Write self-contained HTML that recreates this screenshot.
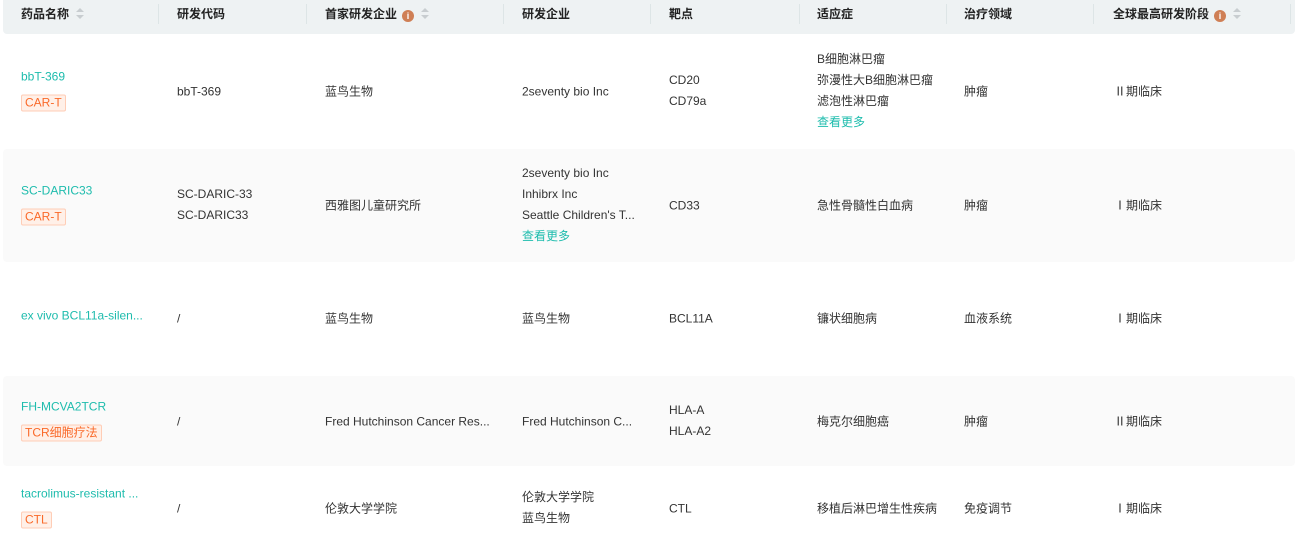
<!DOCTYPE html><html><head><meta charset="utf-8"><style>
*{margin:0;padding:0;box-sizing:border-box}
body{width:1295px;height:540px;background:#fff;font-family:"Liberation Sans","Noto Sans CJK SC",sans-serif;font-size:12px;color:#333;position:relative;overflow:hidden}
.hd{position:absolute;left:3px;top:0;width:1292px;height:34px;background:#eef2f3;border-radius:0 0 4px 4px}
.sep{position:absolute;top:4px;width:1px;height:20px;background:#dde5e6}
.h{position:absolute;top:6px;font-weight:bold;color:#222;font-size:12px;line-height:16px;white-space:nowrap}
.bg{position:absolute;left:3px;width:1292px;background:#fafafa;border-radius:4px}
.c{position:absolute;line-height:21px;white-space:nowrap;transform:translateY(-50%);margin-top:1px}
.lk{color:#1ebcad}
.tag{display:inline-block;color:#fa6a2a;background:#fff0e8;border:1px solid #ffcdb6;border-radius:2px;line-height:15px;padding:0 3px;font-size:12px;margin-top:7px}
.i{display:inline-block;width:12px;height:12px;border-radius:50%;background:#cf7f55;color:#fff;font-size:9px;line-height:12px;text-align:center;font-weight:bold;vertical-align:-1px;margin-left:5px}
.s{display:inline-block;vertical-align:-2px;margin-left:7px;width:8px;height:13px;position:relative}
.s:before,.s:after{content:"";position:absolute;left:0;border-left:4px solid transparent;border-right:4px solid transparent}
.s:before{top:1px;border-bottom:4px solid #c8cdd0}
.s:after{top:8px;border-top:4px solid #c8cdd0}
</style></head><body>
<div class="hd"></div>
<div class="sep" style="left:158px"></div><div class="sep" style="left:306px"></div><div class="sep" style="left:503px"></div><div class="sep" style="left:650px"></div>
<div class="sep" style="left:799px"></div><div class="sep" style="left:946px"></div><div class="sep" style="left:1093px"></div><div class="sep" style="left:1290px"></div>
<div class="h" style="left:21px">药品名称<span class="s"></span></div>
<div class="h" style="left:177px">研发代码</div>
<div class="h" style="left:325px">首家研发企业<span class="i">i</span><span class="s"></span></div>
<div class="h" style="left:522px">研发企业</div>
<div class="h" style="left:669px">靶点</div>
<div class="h" style="left:817px">适应症</div>
<div class="h" style="left:964px">治疗领域</div>
<div class="h" style="left:1113px">全球最高研发阶段<span class="i">i</span><span class="s"></span></div>

<div class="bg" style="top:149px;height:113px"></div>
<div class="bg" style="top:376px;height:90px"></div>

<div class="c" style="left:21px;top:89px"><div class="lk">bbT-369</div><span class="tag">CAR-T</span></div>
<div class="c" style="left:177px;top:91px">bbT-369</div>
<div class="c" style="left:325px;top:91px">蓝鸟生物</div>
<div class="c" style="left:522px;top:91px">2seventy bio Inc</div>
<div class="c" style="left:669px;top:90px">CD20<br>CD79a</div>
<div class="c" style="left:817px;top:90px">B细胞淋巴瘤<br>弥漫性大B细胞淋巴瘤<br>滤泡性淋巴瘤<br><span class="lk">查看更多</span></div>
<div class="c" style="left:964px;top:91px">肿瘤</div>
<div class="c" style="left:1114px;top:91px">Ⅱ期临床</div>

<div class="c" style="left:21px;top:203px"><div class="lk">SC-DARIC33</div><span class="tag">CAR-T</span></div>
<div class="c" style="left:177px;top:204px">SC-DARIC-33<br>SC-DARIC33</div>
<div class="c" style="left:325px;top:205px">西雅图儿童研究所</div>
<div class="c" style="left:522px;top:204px">2seventy bio Inc<br>Inhibrx Inc<br>Seattle Children's T...<br><span class="lk">查看更多</span></div>
<div class="c" style="left:669px;top:205px">CD33</div>
<div class="c" style="left:817px;top:205px">急性骨髓性白血病</div>
<div class="c" style="left:964px;top:205px">肿瘤</div>
<div class="c" style="left:1114px;top:205px">Ⅰ期临床</div>

<div class="c lk" style="left:21px;top:315px">ex vivo BCL11a-silen...</div>
<div class="c" style="left:177px;top:318px">/</div>
<div class="c" style="left:325px;top:318px">蓝鸟生物</div>
<div class="c" style="left:522px;top:318px">蓝鸟生物</div>
<div class="c" style="left:669px;top:318px">BCL11A</div>
<div class="c" style="left:817px;top:318px">镰状细胞病</div>
<div class="c" style="left:964px;top:318px">血液系统</div>
<div class="c" style="left:1114px;top:318px">Ⅰ期临床</div>

<div class="c" style="left:21px;top:419px"><div class="lk">FH-MCVA2TCR</div><span class="tag">TCR细胞疗法</span></div>
<div class="c" style="left:177px;top:421px">/</div>
<div class="c" style="left:325px;top:421px">Fred Hutchinson Cancer Res...</div>
<div class="c" style="left:522px;top:421px">Fred Hutchinson C...</div>
<div class="c" style="left:669px;top:420px">HLA-A<br>HLA-A2</div>
<div class="c" style="left:817px;top:421px">梅克尔细胞癌</div>
<div class="c" style="left:964px;top:421px">肿瘤</div>
<div class="c" style="left:1114px;top:421px">Ⅱ期临床</div>

<div class="c" style="left:21px;top:506px"><div class="lk">tacrolimus-resistant ...</div><span class="tag">CTL</span></div>
<div class="c" style="left:177px;top:508px">/</div>
<div class="c" style="left:325px;top:508px">伦敦大学学院</div>
<div class="c" style="left:522px;top:507px">伦敦大学学院<br>蓝鸟生物</div>
<div class="c" style="left:669px;top:508px">CTL</div>
<div class="c" style="left:817px;top:508px">移植后淋巴增生性疾病</div>
<div class="c" style="left:964px;top:508px">免疫调节</div>
<div class="c" style="left:1114px;top:508px">Ⅰ期临床</div>
</body></html>
